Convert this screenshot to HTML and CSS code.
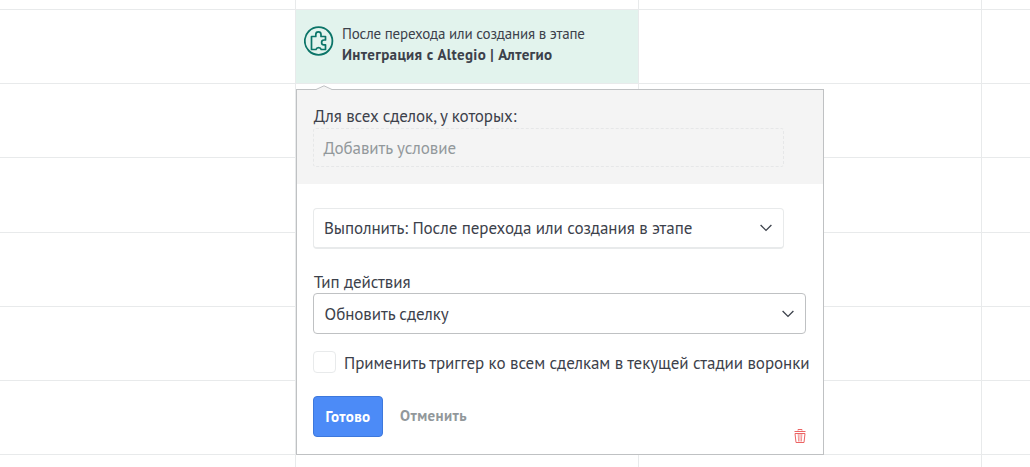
FILE: index.html
```html
<!DOCTYPE html>
<html lang="ru">
<head>
  <meta charset="UTF-8">
  <meta name="viewport" content="width=device-width, initial-scale=1.0">
  <title>Интеграция с Altegio | Алтегио</title>
  <link rel="stylesheet" href="styles.css">
</head>
<body>
  <div class="board">
    <div class="cell"></div><div class="cell"></div><div class="cell"></div><div class="cell"></div>

    <div class="cell"></div>
    <div class="cell trigger">
      <svg class="trigger-icon" width="30" height="30" viewBox="0 0 30 30" fill="none" stroke="#0b7468">
        <circle cx="14.6" cy="15" r="13.8" stroke-width="1.8"/>
        <path d="M7.5 10.5H11.8V8.4A2.6 2.6 0 0 1 17 8.4V10.5H21.5V14H20A2.4 2.4 0 0 0 20 18.8H21.5V23.5H17.2A2.7 2.7 0 0 0 12 23.5H7.5Z" stroke-width="1.7" stroke-linejoin="round"/>
      </svg>
      <div class="trigger-text">
        <div><span class="trigger-when">После перехода или создания в этапе</span></div>
        <div><span class="trigger-name">Интеграция с Altegio | Алтегио</span></div>
      </div>
    </div>
    <div class="cell"></div><div class="cell"></div>

    <div class="cell"></div><div class="cell"></div><div class="cell"></div><div class="cell"></div>
    <div class="cell"></div><div class="cell"></div><div class="cell"></div><div class="cell"></div>
    <div class="cell"></div><div class="cell"></div><div class="cell"></div><div class="cell"></div>
    <div class="cell"></div><div class="cell"></div><div class="cell"></div><div class="cell"></div>
    <div class="cell"></div><div class="cell"></div><div class="cell"></div><div class="cell"></div>
    <div class="cell"></div><div class="cell"></div><div class="cell"></div><div class="cell"></div>
  </div>

  <div class="popup">
    <svg class="popup-arrow" width="20" height="6" viewBox="0 0 20 6">
      <path d="M0 6V4.5H2L10 .8L18 4.5H20V6Z" fill="#f4f4f4"/>
      <path d="M0 4.5H2L10 .8L18 4.5H20" fill="none" stroke="#bfc1c3"/>
    </svg>
    <div class="conditions">
      <div class="label"><span class="conditions-title">Для всех сделок, у которых:</span></div>
      <div class="add-condition"><span class="add-text">Добавить условие</span></div>
    </div>
    <div class="settings">
      <div class="select select-when">
        <span class="when-text">Выполнить: После перехода или создания в этапе</span>
        <svg width="12" height="8" viewBox="0 0 12 8"><path d="M.6 1L6 6.4L11.4 1" fill="none" stroke="#3c414b" stroke-width="1.3"/></svg>
      </div>
      <div class="label"><span class="type-label">Тип действия</span></div>
      <div class="select select-type">
        <span class="type-text">Обновить сделку</span>
        <svg width="12" height="8" viewBox="0 0 12 8"><path d="M.6 1L6 6.4L11.4 1" fill="none" stroke="#3c414b" stroke-width="1.3"/></svg>
      </div>
      <label class="apply">
        <input type="checkbox">
        <span class="apply-text">Применить триггер ко всем сделкам в текущей стадии воронки</span>
      </label>
      <div class="actions">
        <button class="btn-done"><span class="done-text">Готово</span></button>
        <button class="btn-cancel"><span class="cancel-text">Отменить</span></button>
        <svg class="trash" width="12" height="15" viewBox="0 0 12 15" fill="none" stroke="#ec6464">
          <path d="M4 1.5V.5H8V1.5M.5 2.5H11.5"/>
          <path d="M1 4.5H11L10 13.5H2Z"/>
          <path d="M4.2 5L4.6 12.5M7.8 5L7.4 12.5M6 5V12.5" stroke-width=".7"/>
        </svg>
      </div>
    </div>
  </div>
</body>
</html>
```

FILE: styles.css
```css
body {
  margin: 0;
  width: 1030px;
  height: 467px;
  position: relative;
  overflow: hidden;
  background: #fff;
  color: #3c414b;
  font-family: "PT Sans", "Open Sans", "Noto Sans", sans-serif;
  font-size: 17px;
  letter-spacing: -0.07px;
}

/* Pipeline grid */
.board {
  display: grid;
  grid-template-columns: 296px 343px 343px 49px;
  grid-template-rows: 10px 74px 74px 75px 74px 74px 74px 13px;
}

.cell {
  border-right: 1px solid #e8eaeb;
  border-bottom: 1px solid #e8eaeb;
}

.trigger {
  display: flex;
  align-items: flex-start;
  gap: 8px;
  padding: 15px 0 0 8px;
  background: #e2f3ed;
}

.trigger-icon {
  margin-top: 1px;
}

.trigger-text {
  font-size: 15px;
  line-height: 21px;
  margin-top: -2px;
  letter-spacing: -0.18px;
  white-space: nowrap;
}

.trigger-name {
  font-weight: bold;
  letter-spacing: 0.34px;
}

/* Trigger popup */
.popup {
  position: absolute;
  left: 296px;
  top: 89px;
  box-sizing: border-box;
  width: 528px;
  height: 366px;
  background: #fff;
  border: 1px solid #bfc1c3;
}

.popup-arrow {
  position: absolute;
  left: 17px;
  top: -5px;
}

.conditions {
  box-sizing: border-box;
  height: 94px;
  padding: 14px 39px 0 16px;
  background: #f4f4f4;
}

.label {
  padding-left: 0.7px;
  line-height: 24px;
  white-space: nowrap;
}

.add-condition {
  box-sizing: border-box;
  height: 39px;
  padding-left: 9.6px;
  line-height: 38px;
  border: 1px dashed #e6e7e8;
  border-radius: 3px;
  color: #92989b;
}

.settings {
  padding: 24px 17px 0 16px;
}

.select {
  display: flex;
  align-items: center;
  justify-content: space-between;
  box-sizing: border-box;
  height: 41px;
  padding: 0 11px 0 10px;
  border: 1px solid #e8eaeb;
  border-radius: 4px;
  white-space: nowrap;
}

.select-when {
  width: 471px;
  border-bottom-width: 2px;
  margin-bottom: 21px;
}

.select-type {
  margin-top: -1px;
  padding-left: 10.6px;
  border-color: #bfc1c3;
}

.apply {
  display: flex;
  align-items: flex-start;
  gap: 8px;
  height: 24px;
  line-height: 24px;
  margin-top: 17px;
  white-space: nowrap;
}

.apply input {
  appearance: none;
  flex: none;
  box-sizing: border-box;
  width: 23px;
  height: 22px;
  margin: 0;
  border: 1px solid #e8eaeb;
  border-radius: 4px;
}

.actions {
  display: flex;
  margin-top: 21px;
}

.actions button {
  font: inherit;
  font-size: 15px;
  font-weight: bold;
  letter-spacing: 0.38px;
  height: 41px;
  padding: 0;
}

.actions .btn-done {
  width: 70px;
  color: #fff;
  background: #4c8bf7;
  border: 1px solid #3d78dc;
  border-radius: 4px;
}

.actions .btn-cancel {
  margin-left: 17px;
  padding-bottom: 2px;
  color: #92989b;
  background: none;
  border: 0;
}

.trash {
  margin: 33px 0 0 auto;
}
```
